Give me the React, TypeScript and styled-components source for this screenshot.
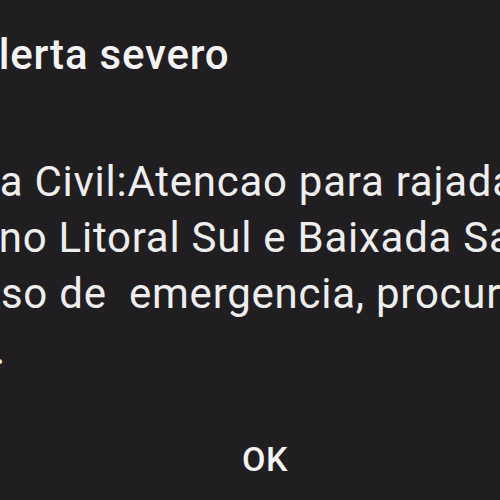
import React from "react";
import styled, { createGlobalStyle } from "styled-components";

const Global = createGlobalStyle`
  html, body {
    margin: 0;
    padding: 0;
    background: #211e21;
  }
  body {
    font-family: Roboto, "Noto Sans", "Liberation Sans", sans-serif;
    color: #f2f2f2;
  }
`;

const Screen = styled.div`
  width: 500px;
  height: 500px;
  overflow: hidden;
  background: #211e21;
`;

const Dialog = styled.div`
  width: 754px;
  margin-left: -112px;
  padding-top: 30px;
  display: flex;
  flex-direction: column;
`;

const TitleRow = styled.div`
  display: flex;
  align-items: center;
  gap: 22px;
  height: 50px;
`;

const TitleIcon = styled.svg`
  width: 60px;
  height: 48px;
  flex: none;
`;

const Title = styled.h1`
  margin: 0;
  font-size: 42px;
  font-weight: 500;
  line-height: 50px;
  letter-spacing: 0.8px;
  white-space: nowrap;
  color: #f4f4f4;
`;

const Message = styled.div`
  margin-top: 74px;
  display: flex;
  flex-direction: column;
`;

const Line = styled.div<{ $indent?: number }>`
  margin-left: ${(p) => p.$indent ?? 0}px;
  font-size: 42px;
  line-height: 56px;
  letter-spacing: 0.75px;
  white-space: pre;
  overflow: hidden;
  color: #eeeeee;
`;

const Footer = styled.div`
  margin-top: 61px;
  display: flex;
  justify-content: center;
`;

const OkButton = styled.button`
  background: none;
  border: none;
  padding: 0;
  font-family: inherit;
  font-size: 34px;
  font-weight: 500;
  line-height: 40px;
  letter-spacing: 0.5px;
  color: #f4f4f4;
  cursor: pointer;
`;

const lines: { text: string; indent: number }[] = [
  { text: "Defesa Civil:Atencao para rajadas de", indent: 0 },
  { text: "vento no Litoral Sul e Baixada Santista.", indent: -7 },
  { text: "No caso de  emergencia, procure", indent: 0 },
  { text: "ajuda.", indent: 0 },
];

export default function App() {
  return (
    <Screen>
      <Global />
      <Dialog>
        <TitleRow>
          <TitleIcon viewBox="0 0 24 24" fill="none" stroke="#f4f4f4" strokeWidth="2">
            <path d="M12 3 L22 20 H2 Z" />
            <path d="M12 9 V14" />
            <path d="M12 17 V17.5" />
          </TitleIcon>
          <Title>Alerta severo</Title>
        </TitleRow>
        <Message>
          {lines.map((l, i) => (
            <Line key={i} $indent={l.indent}>
              {l.text}
            </Line>
          ))}
        </Message>
        <Footer>
          <OkButton>OK</OkButton>
        </Footer>
      </Dialog>
    </Screen>
  );
}
